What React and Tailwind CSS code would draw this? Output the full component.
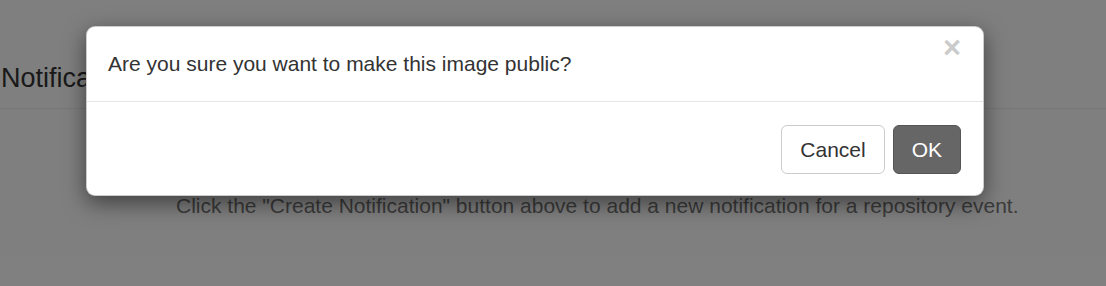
import React from 'react';

export default function App() {
  return (
    <div className="relative h-[286px] w-full overflow-hidden bg-white font-['Liberation_Sans',Arial,sans-serif]">
      {/* Page behind the modal */}
      <div className="border-b border-[#eee] pt-[63px] pb-[15px]">
        <h2 className="pl-px text-[27px] leading-[30px] text-[#333]">Notifications</h2>
      </div>
      <p className="mt-[82px] pl-[176px] text-[21px] leading-[30px] text-[#777]">
        Click the "Create Notification" button above to add a new notification for a repository event.
      </p>

      {/* Backdrop */}
      <div className="absolute inset-0 bg-black/50" />

      {/* Modal */}
      <div className="absolute left-[86px] top-[26px] w-[898px] rounded-[9px] border border-black/20 bg-white shadow-[0_7px_22px_rgba(0,0,0,0.5)]">
        <div className="flex items-start justify-between border-b border-[#e5e5e5] px-[21px] pt-[22px] pb-[23px]">
          <h4 className="text-[21px] leading-[29px] text-[#333]">Are you sure you want to make this image public?</h4>
          <button className="-mt-[17px] mr-[1px] text-[31px] font-bold leading-[31px] text-black opacity-20">×</button>
        </div>
        <div className="flex justify-end gap-[8px] px-[22px] pt-[23px] pb-[21px]">
          <button className="h-[49px] rounded-[6px] border border-[#ccc] bg-white px-[18px] text-[21px] text-[#333]">Cancel</button>
          <button className="h-[49px] rounded-[6px] border border-[#555] bg-[#666] px-[18px] text-[21px] text-white">OK</button>
        </div>
      </div>
    </div>
  );
}
